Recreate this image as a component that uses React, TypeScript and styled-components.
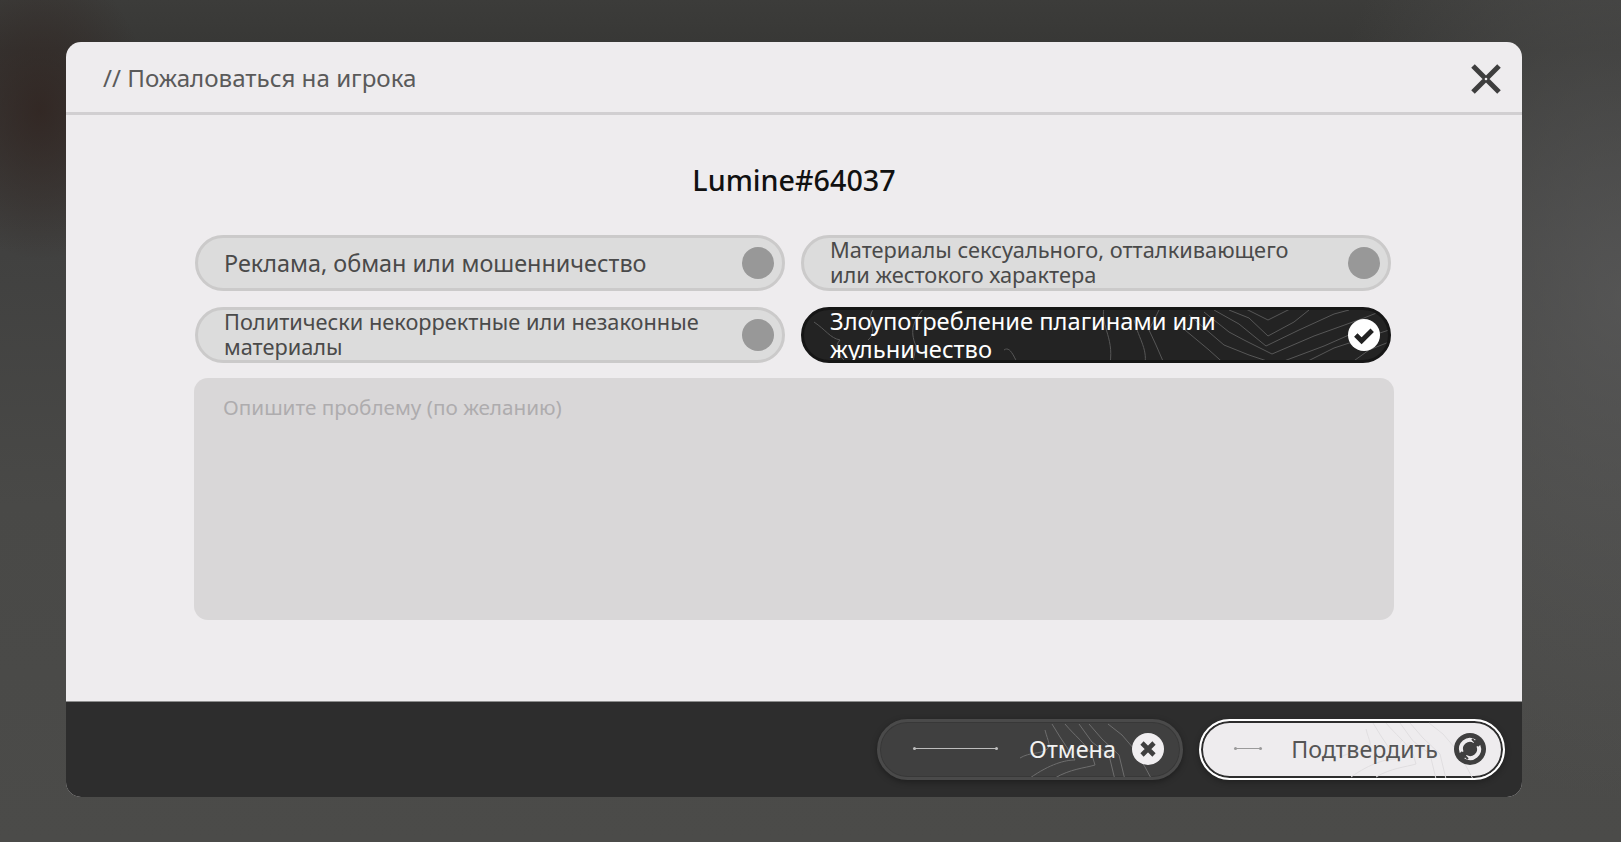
import React from "react";
import styled, { createGlobalStyle } from "styled-components";

const Global = createGlobalStyle`
  html, body { margin: 0; height: 100%; overflow: hidden; }
  body { font-family: "Noto Sans", "Open Sans", sans-serif; }
`;

const Page = styled.div`
  width: 1621px;
  height: 842px;
  box-sizing: border-box;
  padding: 42px 99px 45px 66px;
  background:
    radial-gradient(ellipse 110px 150px at 40px 110px, rgba(48, 34, 30, 0.75), rgba(48, 34, 30, 0) 100%),
    radial-gradient(ellipse 320px 500px at 1621px 300px, rgba(92, 92, 92, 0.7), rgba(92, 92, 92, 0) 100%),
    linear-gradient(180deg, #3c3c3a 0%, #373735 6%, #414140 30%, #494947 60%, #4b4b49 100%);
`;

const Modal = styled.div`
  height: 100%;
  display: flex;
  flex-direction: column;
  background: #eeecee;
  border-radius: 15px;
  overflow: hidden;
`;

const Header = styled.header`
  height: 73px;
  flex: none;
  box-sizing: border-box;
  border-bottom: 3px solid #d1cfd1;
  display: flex;
  align-items: center;
  justify-content: space-between;
  padding: 0 20px 0 37px;
`;

const HeaderTitle = styled.h2`
  margin: 1px 0 0;
  font-size: 24.15px;
  font-weight: 400;
  color: #5a5a5a;
`;

const CloseButton = styled.button`
  border: 0;
  padding: 0;
  width: 32px;
  height: 32px;
  background: none;
  margin-top: 3px;
`;

const Body = styled.main`
  flex: 1;
  padding: 46px 128px 0 128px;
`;

const PlayerName = styled.h1`
  margin: 0 0 36px;
  text-align: center;
  font-size: 28.7px;
  line-height: 38px;
  font-weight: 500;
  color: #111;
`;

const Options = styled.div`
  display: grid;
  grid-template-columns: 590px 590px;
  column-gap: 16px;
  row-gap: 16px;
  padding-left: 1px;
`;

const Option = styled.div<{ $active?: boolean }>`
  position: relative;
  height: 56px;
  box-sizing: border-box;
  border-radius: 28px;
  overflow: hidden;
  display: flex;
  align-items: center;
  padding: 0 8px 0 26px;
  border: 3px solid ${(p) => (p.$active ? "#161616" : "#cbcaca")};
  background: ${(p) => (p.$active ? "#232323" : "#dcdcdc")};
  color: ${(p) => (p.$active ? "#fff" : "#4a4a4a")};
`;

const OptionText = styled.span<{ $size: number; $lh: number; $lift?: number }>`
  position: relative;
  flex: 1;
  margin-top: ${(p) => -(p.$lift ?? 0)}px;
  font-size: ${(p) => p.$size}px;
  line-height: ${(p) => p.$lh}px;
`;

const Dot = styled.span`
  flex: none;
  width: 32px;
  height: 32px;
  border-radius: 50%;
  background: #989898;
`;

const CheckIcon = styled.svg`
  position: relative;
  flex: none;
  width: 32px;
  height: 32px;
`;

const Topo = styled.svg`
  position: absolute;
  left: 0;
  top: 0;
  width: 100%;
  height: 100%;
  fill: none;
  stroke-width: 1;
`;

const Area = styled.textarea`
  display: block;
  width: 100%;
  height: 242px;
  margin-top: 15px;
  box-sizing: border-box;
  border: 0;
  resize: none;
  outline: none;
  border-radius: 14px;
  background: #d9d7d8;
  padding: 15px 29px;
  font-family: inherit;
  font-size: 20.7px;
  line-height: 28px;
  color: #4a4a4a;
  &::placeholder { color: #aeacae; opacity: 1; }
`;

const Footer = styled.footer`
  height: 96px;
  flex: none;
  box-sizing: border-box;
  background: #2d2d2d;
  border-top: 1px solid #8d8d8d;
  display: flex;
  align-items: center;
  justify-content: flex-end;
  gap: 16px;
  padding: 0 17px 1px 0;
`;

const ActionButton = styled.button<{ $primary?: boolean }>`
  position: relative;
  width: 306px;
  height: 61px;
  box-sizing: border-box;
  border-radius: 31px;
  overflow: hidden;
  display: flex;
  align-items: center;
  padding: 0 ${(p) => (p.$primary ? 17 : 16)}px 0 34px;
  font-family: inherit;
  font-size: ${(p) => (p.$primary ? 23.2 : 23.4)}px;
  background: ${(p) => (p.$primary ? "#eeecee" : "#404040")};
  color: ${(p) => (p.$primary ? "#555" : "#f2f2f2")};
  border: ${(p) => (p.$primary ? "2px solid #fff" : "3px solid #4a4a4a")};
  box-shadow: ${(p) =>
    p.$primary
      ? "inset 0 0 0 2px #2d2d2d, 0 2px 6px rgba(0,0,0,.3)"
      : "inset 0 0 0 1px #383838, 0 2px 6px rgba(0,0,0,.35)"};
`;

const Rule = styled.span<{ $width: number; $dark?: boolean }>`
  position: relative;
  width: ${(p) => p.$width}px;
  height: 1px;
  flex: none;
  margin-top: -2px;
  background: ${(p) => (p.$dark ? "#9a9a9a" : "#bdbdbd")};
  &::before, &::after {
    content: "";
    position: absolute;
    top: -1px;
    width: 3px;
    height: 3px;
    border-radius: 50%;
    background: inherit;
  }
  &::before { left: -1px; }
  &::after { right: -1px; }
`;

const ActionLabel = styled.span`
  position: relative;
  margin-left: auto;
  margin-right: 16px;
`;

const ActionIcon = styled.svg`
  position: relative;
  flex: none;
  width: 32px;
  height: 32px;
`;

const optionTopo = [
  "M440 -2 L464 10 L488 -2",
  "M425 0 L445 8 L464 26 L490 12 L505 0",
  "M410 0 L435 14 L462 36 L495 20 L530 4 L545 0",
  "M400 2 L425 22 L440 30 L468 44 L510 26 L560 8 L580 0",
  "M385 5 L420 35 L445 45 L472 54 L520 36 L570 14",
  "M375 15 L405 40 L425 58",
  "M490 58 L530 38 L585 20",
  "M540 58 L565 40 L595 28",
  "M355 0 L345 20 L352 35 L362 58",
  "M330 10 C335 30 345 40 340 58",
  "M300 -2 C296 16 312 30 305 58",
  "M200 40 C208 34 212 56 218 58",
  "M120 -2 C110 10 105 20 112 36 L108 58",
  "M70 -2 C60 12 76 20 64 30",
  "M10 12 C22 20 26 28 36 30 C30 36 34 44 40 50",
];

const buttonTopo = [
  "M228 2 L242 13 L254 27 L265 45 L272 58",
  "M209 2 L222 17 L239 33 L245 58",
  "M199 2 L212 20 L229 33 L235 58",
  "M185 2 C195 14 204 20 212 33 L215 43 C205 46 190 47 175 56",
  "M172 2 L180 15 L190 30 L195 38 C185 38 170 42 150 56",
  "M165 8 C168 20 172 24 166 28 C160 32 150 30 140 36",
];

const App = () => (
  <Page>
    <Global />
    <Modal>
      <Header>
        <HeaderTitle>// Пожаловаться на игрока</HeaderTitle>
        <CloseButton aria-label="close">
          <svg width="32" height="32" viewBox="0 0 32 32">
            <path d="M3 3 L29 29 M29 3 L3 29" stroke="#3e3e3e" strokeWidth="5" strokeLinecap="butt" />
            <circle cx="16" cy="16" r="1.3" fill="#eeecee" />
          </svg>
        </CloseButton>
      </Header>
      <Body>
        <PlayerName>Lumine#64037</PlayerName>
        <Options>
          <Option>
            <OptionText $size={23.4} $lh={30}>Реклама, обман или мошенничество</OptionText>
            <Dot />
          </Option>
          <Option>
            <OptionText $size={21.8} $lh={25} $lift={2}>Материалы сексуального, отталкивающего<br />или жестокого характера</OptionText>
            <Dot />
          </Option>
          <Option>
            <OptionText $size={21.75} $lh={25} $lift={2}>Политически некорректные или незаконные<br />материалы</OptionText>
            <Dot />
          </Option>
          <Option $active>
            <Topo viewBox="0 0 584 50" stroke="#575757">
              {optionTopo.map((d) => <path key={d} d={d} />)}
            </Topo>
            <OptionText $size={23.7} $lh={28}>Злоупотребление плагинами или<br />жульничество</OptionText>
            <CheckIcon viewBox="0 0 32 32">
              <circle cx="16" cy="16" r="16" fill="#fff" />
              <path d="M7.8 16 L13.6 21.8 L24.2 11.2" fill="none" stroke="#222" strokeWidth="4.8" />
            </CheckIcon>
          </Option>
        </Options>
        <Area placeholder="Опишите проблему (по желанию)" />
      </Body>
      <Footer>
        <ActionButton>
          <Topo viewBox="0 0 300 55" stroke="#6e6e6e">
            {buttonTopo.map((d) => <path key={d} d={d} />)}
          </Topo>
          <Rule $width={83} />
          <ActionLabel>Отмена</ActionLabel>
          <ActionIcon viewBox="0 0 32 32">
            <circle cx="16" cy="16" r="16" fill="#f0eef0" />
            <path d="M10 10 L22 22 M22 10 L10 22" stroke="#3f3f3f" strokeWidth="4.6" />
          </ActionIcon>
        </ActionButton>
        <ActionButton $primary>
          <Topo viewBox="0 0 302 57" stroke="#e0dee0">
            {buttonTopo.map((d) => <path key={d} d={d} />)}
          </Topo>
          <Rule $width={26} $dark />
          <ActionLabel>Подтвердить</ActionLabel>
          <ActionIcon viewBox="0 0 32 32">
            <circle cx="16" cy="16" r="16" fill="#3f3f3f" />
            <path d="M7.6 19.2 A9 9 0 0 1 20.6 8.2 M24.4 12.8 A9 9 0 0 1 11.4 23.8" fill="none" stroke="#eeecee" strokeWidth="4" />
            <path d="M18 6 L25 13 M7 19 L14 26" stroke="#3f3f3f" strokeWidth="2" />
          </ActionIcon>
        </ActionButton>
      </Footer>
    </Modal>
  </Page>
);

export default App;
